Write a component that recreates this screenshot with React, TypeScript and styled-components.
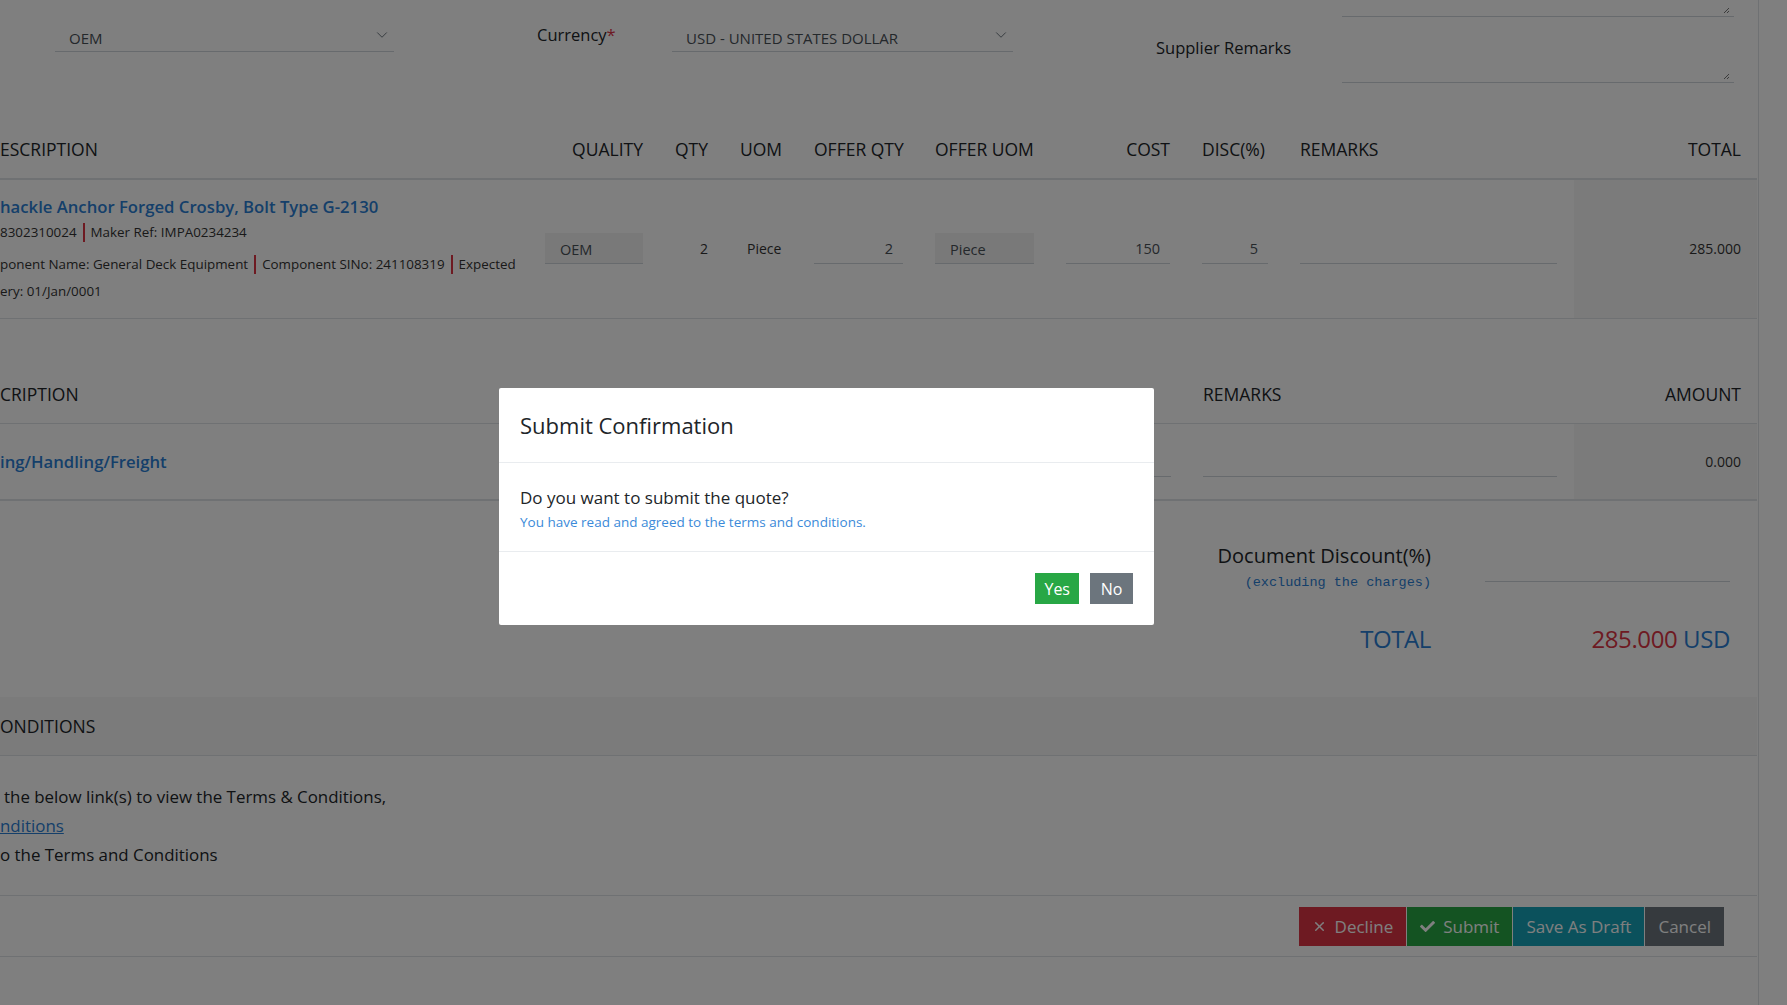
import React from "react";
import styled, { createGlobalStyle } from "styled-components";
import { ChevronDown, X } from "lucide-react";
import { FaCheck } from "react-icons/fa";

const BLUE = "#2b7fd4";
const RED = "#dc3545";
const LINE = "#dee2e6";
const INPUT_LINE = "#ced4da";

const GlobalStyle = createGlobalStyle`
  html, body {
    margin: 0;
    padding: 0;
  }
  body {
    font-family: "Open Sans", "Noto Sans", sans-serif;
    color: #212529;
    background: #fff;
  }
  * {
    box-sizing: border-box;
  }
`;

const Screen = styled.div`
  position: relative;
  width: 1787px;
  height: 1005px;
  overflow: hidden;
  background: #fff;
`;

const Card = styled.div`
  width: 1759px;
  min-height: 1005px;
  border-right: 1px solid ${LINE};
`;

/* ---------- top form ---------- */

const TopForm = styled.div`
  display: flex;
  align-items: flex-start;
  height: 123px;
  padding-left: 55px;
`;

const SelectBox = styled.div<{ $w: number }>`
  width: ${(p) => p.$w}px;
  height: 28px;
  margin-top: 24px;
  display: flex;
  align-items: center;
  justify-content: space-between;
  padding: 0 3px 0 14px;
  border-bottom: 1px solid ${INPUT_LINE};
  font-size: 15px;
  color: #495057;

  svg {
    color: #6c757d;
    margin-top: -6px;
  }
`;

const FieldLabel = styled.label<{ $ml: number; $w: number; $mt: number }>`
  margin-left: ${(p) => p.$ml}px;
  width: ${(p) => p.$w}px;
  margin-top: ${(p) => p.$mt}px;
  font-size: 16.5px;
  line-height: 26px;
`;

const Req = styled.span`
  color: ${RED};
`;

const NoteColumn = styled.div`
  width: 392px;
  margin-top: -33px;
  display: flex;
  flex-direction: column;
  gap: 16px;
`;

const NoteArea = styled.div`
  position: relative;
  height: 50px;
  border-bottom: 1px solid ${INPUT_LINE};
`;

const Grip = styled.svg`
  position: absolute;
  right: 4px;
  bottom: 2px;
`;

/* ---------- tables ---------- */

const ITEM_COLS = "545px 130px 65px 74px 121px 131px 136px 98px 274px 183px";
const CHARGE_COLS = "870px 333px 371px 183px";

const Grid = styled.div<{ $cols: string }>`
  display: grid;
  grid-template-columns: ${(p) => p.$cols};
  width: 1757px;
`;

const HeadRow = styled(Grid)<{ $h: number; $border: number; $lift?: number }>`
  height: ${(p) => p.$h}px;
  padding-bottom: ${(p) => p.$lift ?? 0}px;
  border-bottom: ${(p) => p.$border}px solid ${LINE};
  align-items: center;
  font-size: 17.5px;
  text-transform: uppercase;
`;

const Th = styled.div<{ $align?: "left" | "right"; $pr?: number; $pl?: number }>`
  text-align: ${(p) => p.$align ?? "left"};
  padding-right: ${(p) => p.$pr ?? 32}px;
  padding-left: ${(p) => p.$pl ?? 0}px;
  white-space: nowrap;
`;

const BodyRow = styled(Grid)<{ $border: number }>`
  border-bottom: ${(p) => p.$border}px solid ${LINE};
  align-items: stretch;
`;

const Td = styled.div<{ $align?: "left" | "right"; $pr?: number; $pl?: number; $shade?: boolean }>`
  display: flex;
  align-items: center;
  justify-content: ${(p) => (p.$align === "right" ? "flex-end" : "flex-start")};
  padding-right: ${(p) => p.$pr ?? 32}px;
  padding-left: ${(p) => p.$pl ?? 0}px;
  background: ${(p) => (p.$shade ? "#f7f7f7" : "transparent")};
  font-size: 14px;
  color: #333;
`;

const DescCell = styled.div<{ $pt: number; $pb: number }>`
  padding: ${(p) => p.$pt}px 32px ${(p) => p.$pb}px 0;
  white-space: nowrap;
  overflow: hidden;
`;

const ItemTitle = styled.div`
  font-size: 16.7px;
  line-height: 25.5px;
  font-weight: 600;
  color: ${BLUE};
`;

const ItemMeta = styled.div<{ $lh: number; $mb?: number }>`
  font-size: 13.4px;
  line-height: ${(p) => p.$lh}px;
  margin-bottom: ${(p) => p.$mb ?? 0}px;
  color: #333;
`;

const Sep = styled.span`
  display: inline-block;
  width: 2px;
  height: 19px;
  margin: 0 6px;
  vertical-align: middle;
  background: ${RED};
`;

const ReadBox = styled.div`
  width: 100%;
  height: 31px;
  display: flex;
  align-items: center;
  padding: 3px 15px 0;
  background: #f2f2f2;
  border-bottom: 1px solid ${INPUT_LINE};
  font-size: 14.5px;
  color: #495057;
`;

const LineInput = styled.div`
  width: 100%;
  height: 31px;
  display: flex;
  align-items: center;
  justify-content: flex-end;
  padding: 0 10px;
  border-bottom: 1px solid ${INPUT_LINE};
  font-size: 14.5px;
  color: #495057;
`;

const ChargesBlock = styled.div`
  margin-top: 47px;
`;

/* ---------- summary ---------- */

const Summary = styled.div`
  display: grid;
  grid-template-columns: 1fr 245px;
  column-gap: 54px;
  row-gap: 26px;
  width: 1757px;
  padding: 40px 27px 40px 0;
`;

const SumLabel = styled.div`
  text-align: right;
`;

const DiscTitle = styled.div`
  font-size: 20px;
  line-height: 30px;
`;

const DiscNote = styled.div`
  font-family: "Liberation Mono", monospace;
  font-size: 13.5px;
  line-height: 24px;
  color: ${BLUE};
`;

const DiscInput = styled.div`
  margin-top: 10px;
  height: 31px;
  border-bottom: 1px solid ${INPUT_LINE};
`;

const BigFigure = styled.div`
  text-align: right;
  font-size: 24px;
  line-height: 36px;
  letter-spacing: -0.4px;
  color: ${BLUE};
`;

const Amount = styled.span`
  color: ${RED};
`;

/* ---------- terms ---------- */

const SectionHead = styled.div`
  height: 59px;
  width: 1757px;
  display: flex;
  align-items: center;
  border-bottom: 1px solid ${LINE};
  background: #f7f7f7;
  font-size: 17.5px;
  text-transform: uppercase;
`;

const TermsBody = styled.div`
  padding: 26px 0 26px;
  font-size: 16.9px;
  line-height: 29px;
`;

const TermsLine = styled.div<{ $indent?: number }>`
  padding-left: ${(p) => p.$indent ?? 0}px;
  white-space: nowrap;
`;

const TermsLink = styled.a`
  color: ${BLUE};
  text-decoration: underline;
`;

const ActionBar = styled.div`
  width: 1757px;
  display: flex;
  justify-content: flex-end;
  gap: 1px;
  padding: 11px 33px 10px 0;
  border-top: 1px solid ${LINE};
  border-bottom: 1px solid ${LINE};
`;

const ActionButton = styled.button<{ $bg: string }>`
  height: 39px;
  display: inline-flex;
  align-items: center;
  gap: 8px;
  padding: 0 13px;
  border: 0;
  border-radius: 0;
  background: ${(p) => p.$bg};
  color: #fff;
  font-family: inherit;
  font-size: 17px;
`;

/* ---------- modal ---------- */

const Backdrop = styled.div`
  position: absolute;
  inset: 0;
  background: rgba(0, 0, 0, 0.5);
`;

const Dialog = styled.div`
  position: absolute;
  left: 499px;
  top: 388px;
  width: 655px;
  background: #fff;
  border-radius: 2px;
`;

const DialogHeader = styled.div`
  padding: 20px 21px;
  border-bottom: 1px solid #e9ecef;
`;

const DialogTitle = styled.h5`
  margin: 0;
  font-size: 22px;
  line-height: 34px;
  font-weight: 500;
`;

const DialogBody = styled.div`
  padding: 22px 21px 18px;
`;

const Question = styled.div`
  font-size: 17px;
  line-height: 26px;
`;

const Agreement = styled.div`
  font-size: 13.5px;
  line-height: 22px;
  color: #3b8ad9;
`;

const DialogFooter = styled.div`
  display: flex;
  justify-content: flex-end;
  gap: 11px;
  padding: 21px;
  border-top: 1px solid #e9ecef;
`;

const DialogButton = styled.button<{ $bg: string }>`
  height: 31px;
  min-width: 43px;
  padding: 0 9px;
  border: 0;
  border-radius: 0;
  background: ${(p) => p.$bg};
  color: #fff;
  font-family: inherit;
  font-size: 16px;
`;

const ResizeGrip = () => (
  <Grip width="7" height="7" viewBox="0 0 7 7">
    <path d="M1 6 L6 1 M4 6 L6 4" stroke="#777" strokeWidth="1" />
  </Grip>
);

const App = () =>
(
  <Screen>
    <GlobalStyle />
    <Card>
      <TopForm>
        <SelectBox $w={339}>
          <span>OEM</span>
          <ChevronDown size={18} strokeWidth={1.3} />
        </SelectBox>
        <FieldLabel $ml={143} $w={135} $mt={22}>
          Currency<Req>*</Req>
        </FieldLabel>
        <SelectBox $w={341}>
          <span>USD - UNITED STATES DOLLAR</span>
          <ChevronDown size={18} strokeWidth={1.3} />
        </SelectBox>
        <FieldLabel $ml={143} $w={186} $mt={35}>
          Supplier Remarks
        </FieldLabel>
        <NoteColumn>
          <NoteArea><ResizeGrip /></NoteArea>
          <NoteArea><ResizeGrip /></NoteArea>
        </NoteColumn>
      </TopForm>

      <HeadRow $cols={ITEM_COLS} $h={57} $border={2} $lift={4}>
        <Th>ESCRIPTION</Th>
        <Th $align="right">Quality</Th>
        <Th $align="right">Qty</Th>
        <Th>UOM</Th>
        <Th>Offer Qty</Th>
        <Th>Offer UOM</Th>
        <Th $align="right">Cost</Th>
        <Th>Disc(%)</Th>
        <Th>Remarks</Th>
        <Th $align="right" $pr={16}>Total</Th>
      </HeadRow>
      <BodyRow $cols={ITEM_COLS} $border={1}>
        <DescCell $pt={14} $pb={13}>
          <ItemTitle>hackle Anchor Forged Crosby, Bolt Type G-2130</ItemTitle>
          <ItemMeta $lh={25} $mb={6}>
            8302310024<Sep />Maker Ref: IMPA0234234
          </ItemMeta>
          <ItemMeta $lh={27}>
            ponent Name: General Deck Equipment<Sep />Component SINo: 241108319<Sep />Expected
          </ItemMeta>
          <ItemMeta $lh={27}>ery: 01/Jan/0001</ItemMeta>
        </DescCell>
        <Td><ReadBox>OEM</ReadBox></Td>
        <Td $align="right">2</Td>
        <Td $pl={7}>Piece</Td>
        <Td><LineInput>2</LineInput></Td>
        <Td><ReadBox>Piece</ReadBox></Td>
        <Td><LineInput>150</LineInput></Td>
        <Td><LineInput>5</LineInput></Td>
        <Td $pr={17}><LineInput /></Td>
        <Td $align="right" $pr={16} $shade>285.000</Td>
      </BodyRow>

      <ChargesBlock>
        <HeadRow $cols={CHARGE_COLS} $h={58} $border={1}>
          <Th>CRIPTION</Th>
          <Th />
          <Th>Remarks</Th>
          <Th $align="right" $pr={16}>Amount</Th>
        </HeadRow>
        <BodyRow $cols={CHARGE_COLS} $border={2}>
          <DescCell $pt={25} $pb={25}>
            <ItemTitle>ing/Handling/Freight</ItemTitle>
          </DescCell>
          <Td><LineInput /></Td>
          <Td $pr={17}><LineInput /></Td>
          <Td $align="right" $pr={16} $shade>0.000</Td>
        </BodyRow>
      </ChargesBlock>

      <Summary>
        <SumLabel>
          <DiscTitle>Document Discount(%)</DiscTitle>
          <DiscNote>(excluding the charges)</DiscNote>
        </SumLabel>
        <DiscInput />
        <BigFigure>TOTAL</BigFigure>
        <BigFigure><Amount>285.000</Amount> USD</BigFigure>
      </Summary>

      <SectionHead>ONDITIONS</SectionHead>
      <TermsBody>
        <TermsLine $indent={4}>the below link(s) to view the Terms &amp; Conditions,</TermsLine>
        <TermsLine><TermsLink href="#">nditions</TermsLink></TermsLine>
        <TermsLine>o the Terms and Conditions</TermsLine>
      </TermsBody>
      <ActionBar>
        <ActionButton $bg="#dc3545"><X size={15} strokeWidth={2.4} />Decline</ActionButton>
        <ActionButton $bg="#28a745"><FaCheck size={15} />Submit</ActionButton>
        <ActionButton $bg="#17a2b8">Save As Draft</ActionButton>
        <ActionButton $bg="#6c757d">Cancel</ActionButton>
      </ActionBar>
    </Card>

    <Backdrop>
      <Dialog>
        <DialogHeader>
          <DialogTitle>Submit Confirmation</DialogTitle>
        </DialogHeader>
        <DialogBody>
          <Question>Do you want to submit the quote?</Question>
          <Agreement>You have read and agreed to the terms and conditions.</Agreement>
        </DialogBody>
        <DialogFooter>
          <DialogButton $bg="#28a745">Yes</DialogButton>
          <DialogButton $bg="#6c757d">No</DialogButton>
        </DialogFooter>
      </Dialog>
    </Backdrop>
  </Screen>
);

export default App;
